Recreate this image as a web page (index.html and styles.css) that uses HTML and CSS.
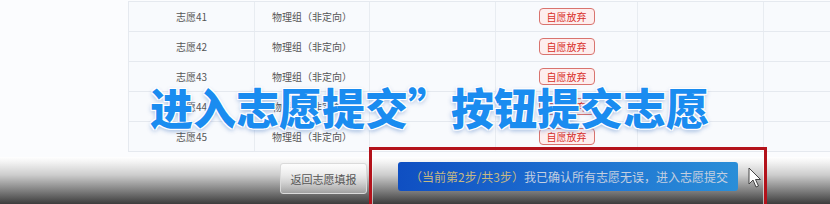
FILE: index.html
```html
<!DOCTYPE html>
<html lang="zh-CN">
<head>
<meta charset="utf-8">
<link rel="stylesheet" href="styles.css">
</head>
<body>
<div class="page">
  <div class="content">
    <div class="table">
      <div class="row"><div class="c c1">志愿41</div><div class="c c2">物理组（非定向）</div><div class="c c3"></div><div class="c c4"><span class="badge">自愿放弃</span></div><div class="c c5"></div><div class="c c6"></div></div>
      <div class="row"><div class="c c1">志愿42</div><div class="c c2">物理组（非定向）</div><div class="c c3"></div><div class="c c4"><span class="badge">自愿放弃</span></div><div class="c c5"></div><div class="c c6"></div></div>
      <div class="row"><div class="c c1">志愿43</div><div class="c c2">物理组（非定向）</div><div class="c c3"></div><div class="c c4"><span class="badge">自愿放弃</span></div><div class="c c5"></div><div class="c c6"></div></div>
      <div class="row"><div class="c c1">志愿44</div><div class="c c2">物理组（非定向）</div><div class="c c3"></div><div class="c c4"><span class="badge">自愿放弃</span></div><div class="c c5"></div><div class="c c6"></div></div>
      <div class="row"><div class="c c1">志愿45</div><div class="c c2">物理组（非定向）</div><div class="c c3"></div><div class="c c4"><span class="badge">自愿放弃</span></div><div class="c c5"></div><div class="c c6"></div></div>
    </div>
  </div>
  <div class="footer">
    <button class="btn-back">返回志愿填报</button>
    <button class="btn-next"><span class="step">（当前第2步/共3步）</span>我已确认所有志愿无误，进入志愿提交</button>
  </div>
  <div class="caption">进入志愿提交”按钮提交志愿</div>
  <div class="redbox"></div>
  <svg class="cursor" width="14" height="22" viewBox="0 0 14 22">
    <path d="M1 1 L1 17 L5 13 L8 20 L10.5 19 L7.5 12.5 L12.5 12.5 Z" fill="#fff" stroke="#444" stroke-width="1" stroke-linejoin="round"/>
  </svg>
</div>
</body>
</html>
```
FILE: styles.css
```css
* { box-sizing: border-box; margin: 0; padding: 0; }
html, body { width: 830px; height: 204px; overflow: hidden; background: #fbfcfe; }
body { font-family: "Noto Sans CJK SC", "Liberation Sans", sans-serif; }
.page { position: relative; width: 830px; height: 204px; display: flex; flex-direction: column; }
.content { height: 157px; padding-top: 1px; padding-left: 128px; }
.table { border-top: 1px solid #e5e9ef; border-left: 1px solid #e5e9ef; background: #f8fafd; width: 702px; }
.row { display: grid; grid-template-columns: 126px 115px 126px 142px 126px 67px; height: 30px; border-bottom: 1px solid #e5e9ef; }
.c { display: flex; align-items: center; justify-content: center; border-right: 1px solid #e8ecf1; font-size: 10px; color: #555; }
.c6 { border-right: none; }
.badge { display: inline-flex; align-items: center; justify-content: center; width: 56px; height: 17px; border: 1px solid #d9736e; border-radius: 4px; background: #fdeeee; color: #d9302a; font-size: 10px; }
.footer { flex: 1; display: flex; align-items: flex-start; padding-left: 280px; padding-top: 5px; gap: 31px;
  background: linear-gradient(to bottom, #ffffff 0%, #f4f4f4 10%, #cdcdcd 38%, #7e7e7e 72%, #3c3c3c 100%); }
.btn-back { width: 87px; height: 31px; margin-top: 1px; border: 1px solid #dadada; border-radius: 3px; background: linear-gradient(to bottom, rgba(255,255,255,0.85), rgba(225,225,225,0.4)); color: #555; font-family: inherit; font-size: 11px; }
.btn-next { width: 340px; height: 29px; border: none; border-radius: 3px; background: linear-gradient(90deg, #0f4fc2 0%, #1d6fd0 50%, #2a8ed8 100%); color: #c4cfe0; font-family: inherit; font-size: 12px; display: flex; align-items: center; padding-left: 12px; }
.step { color: #c4b884; }
.caption { position: absolute; left: 150px; top: 85px; font-size: 43px; line-height: 1; font-weight: 900; color: #1a8cf0; white-space: nowrap;
  text-shadow: 1px 1px 0 #fff, -1px -1px 0 #fff, 1px -1px 0 #fff, -1px 1px 0 #fff, 0 0 3px #fff, 0 2px 5px rgba(0, 70, 170, 0.45); }
.redbox { position: absolute; left: 369px; top: 147px; width: 398px; height: 64px; border: 3px solid #b3121b; box-shadow: inset 0 0 0 1px rgba(255,255,255,0.6); }
.cursor { position: absolute; left: 748px; top: 167px; }
```
